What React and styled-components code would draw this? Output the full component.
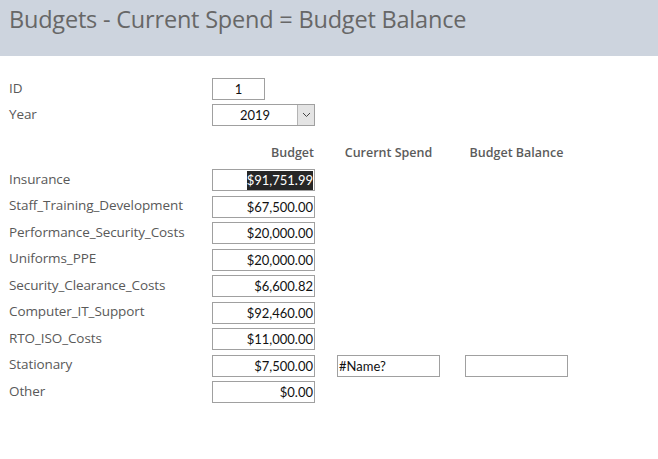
import styled, { createGlobalStyle } from "styled-components";

const budgetRows = [
  { label: "Insurance", value: "$91,751.99", selected: true },
  { label: "Staff_Training_Development", value: "$67,500.00" },
  { label: "Performance_Security_Costs", value: "$20,000.00" },
  { label: "Uniforms_PPE", value: "$20,000.00" },
  { label: "Security_Clearance_Costs", value: "$6,600.82" },
  { label: "Computer_IT_Support", value: "$92,460.00" },
  { label: "RTO_ISO_Costs", value: "$11,000.00" },
  { label: "Stationary", value: "$7,500.00", spend: "#Name?", balance: "" },
  { label: "Other", value: "$0.00" },
];

const App = () => {
  return (
    <>
      <GlobalStyle />
      <Page>
        <Header>
          <Title>Budgets - Current Spend = Budget Balance</Title>
        </Header>
        <Form>
          <TopRow>
            <Label>ID</Label>
            <Box width="53px" align="center">1</Box>
          </TopRow>
          <TopRow>
            <Label>Year</Label>
            <Select>
              <SelectValue>2019</SelectValue>
              <SelectArrow>
                <svg width="9" height="6" viewBox="0 0 9 6">
                  <path d="M1 1 L4.5 4.5 L8 1" fill="none" stroke="#444" strokeWidth="1" />
                </svg>
              </SelectArrow>
            </Select>
          </TopRow>
          <HeadRow>
            <span />
            <ColHead align="right">Budget</ColHead>
            <span />
            <ColHead>Curernt Spend</ColHead>
            <span />
            <ColHead>Budget Balance</ColHead>
          </HeadRow>
          <Rows>
            {budgetRows.map((row) => (
              <GridRow key={row.label}>
                <Label>{row.label}</Label>
                <Box align="right">
                  {row.selected ? <Selected>{row.value}</Selected> : row.value}
                </Box>
                <span />
                {row.spend !== undefined ? <Box align="left">{row.spend}</Box> : <span />}
                <span />
                {row.balance !== undefined ? <Box /> : <span />}
              </GridRow>
            ))}
          </Rows>
        </Form>
      </Page>
    </>
  );
};

const GlobalStyle = createGlobalStyle`
  body {
    margin: 0;
    background: #ffffff;
  }
`;

const Page = styled.div`
  width: 658px;
  height: 459px;
  background: #ffffff;
`;

const Header = styled.div`
  height: 56px;
  background: #cdd4de;
  padding-left: 9px;
  box-sizing: border-box;
  display: flex;
  align-items: flex-start;
`;

const Title = styled.div`
  font-family: "Open Sans", sans-serif;
  font-size: 23.5px;
  color: #676767;
  margin-top: 3px;
  letter-spacing: -0.2px;
`;

const Form = styled.div`
  padding: 22px 0 0 9px;
  display: flex;
  flex-direction: column;
`;

const columns = "203px 103px 22px 103px 25px 103px";

const TopRow = styled.div`
  display: grid;
  grid-template-columns: 203px auto;
  align-items: center;
  height: 22px;
  margin-bottom: 4px;
`;

const HeadRow = styled.div`
  display: grid;
  grid-template-columns: ${columns};
  margin-top: 5px;
  height: 34px;
  align-items: center;
`;

const ColHead = styled.div`
  font-family: "Open Sans", sans-serif;
  font-weight: 600;
  font-size: 12.5px;
  color: #5b5b5b;
  text-align: ${(p) => (p.align === "right" ? "right" : "center")};
  padding-right: ${(p) => (p.align === "right" ? "1px" : "0")};
`;

const Rows = styled.div`
  display: flex;
  flex-direction: column;
  gap: 4.5px;
`;

const GridRow = styled.div`
  display: grid;
  grid-template-columns: ${columns};
  align-items: center;
  height: 22px;
`;

const Label = styled.div`
  font-family: "Open Sans", sans-serif;
  font-size: 13.5px;
  color: #595959;
  letter-spacing: -0.1px;
  margin-top: -3px;
`;

const Box = styled.div`
  box-sizing: border-box;
  width: ${(p) => p.width || "103px"};
  height: 22px;
  border: 1px solid #a0a0a0;
  background: #ffffff;
  font-family: "Lato", sans-serif;
  font-size: 13px;
  color: #111;
  display: flex;
  align-items: center;
  justify-content: ${(p) =>
    p.align === "right" ? "flex-end" : p.align === "center" ? "center" : "flex-start"};
  padding: 0 1px;
  white-space: nowrap;
`;

const Selected = styled.span`
  background: #262626;
  color: #ffffff;
  line-height: 19px;
`;

const Select = styled.div`
  box-sizing: border-box;
  width: 103px;
  height: 22px;
  border: 1px solid #a0a0a0;
  display: flex;
  align-items: stretch;
`;

const SelectValue = styled.div`
  flex: 1;
  display: flex;
  align-items: center;
  justify-content: center;
  font-family: "Lato", sans-serif;
  font-size: 13px;
  color: #111;
`;

const SelectArrow = styled.div`
  width: 16px;
  background: #e4e4e4;
  border-left: 1px solid #b4b4b4;
  display: flex;
  align-items: center;
  justify-content: center;
`;

export default App;
